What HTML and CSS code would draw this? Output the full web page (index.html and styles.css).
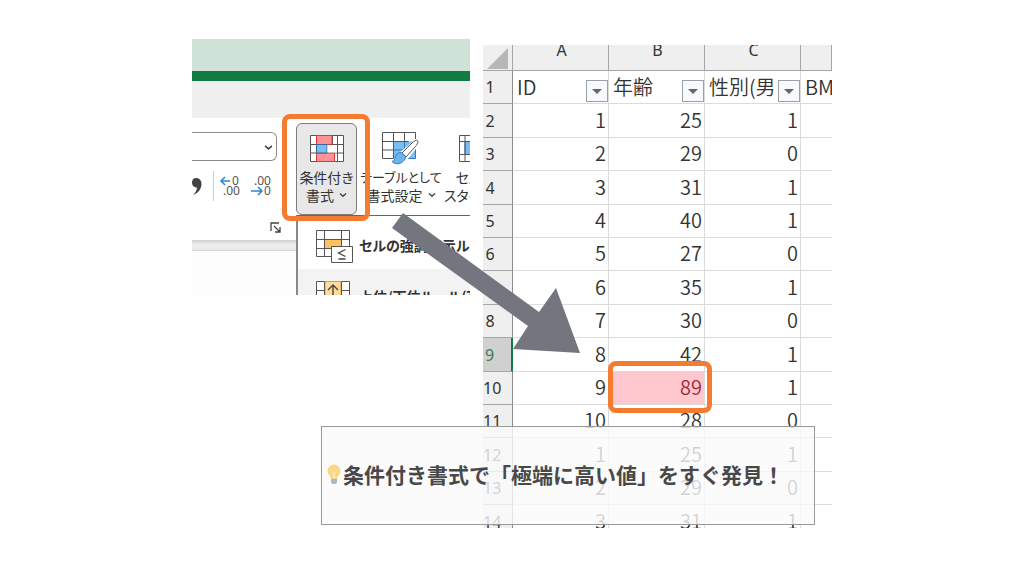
FILE: index.html
```html
<!DOCTYPE html>
<html lang="ja">
<head>
<meta charset="utf-8">
<meta name="viewport" content="width=device-width, initial-scale=1">
<title>条件付き書式</title>
<link rel="stylesheet" href="styles.css">
</head>
<body>
<main class="slide">
  <section class="excel" aria-label="リボン">
    <div class="excel-title"></div>
    <div class="excel-accent"></div>
    <div class="excel-tabs"></div>
    <div class="ribbon">
      <div class="number-group">
        <select class="format-select" aria-label="表示形式"><option></option></select>
        <svg class="select-chevron" viewBox="0 0 8 6"><path d="M1 1.5 4 4.2 7 1.5"/></svg>
        <div class="number-tools">
          <button class="tool comma" aria-label="桁区切り">
            <svg width="10" height="19" viewBox="0 0 10 19"><path d="M4 1c3.500 0 5.500 2.500 5.500 6C9.500 12 6 16.500 1 18c2.500-2.500 4-5 4-7.500C1.500 10.500 0 8 0 5.500 0 3 1.500 1 4 1z"/></svg>
          </button>
          <span class="tool-divider"></span>
          <button class="tool" aria-label="小数点以下の表示桁数を増やす">
            <svg width="22" height="24" viewBox="0 0 22 24"><path class="blue-line" d="M11 7H2M6 3 2 7l4 4"/><text x="13" y="11">0</text><text x="4" y="21">.00</text></svg>
          </button>
          <button class="tool" aria-label="小数点以下の表示桁数を減らす">
            <svg width="22" height="24" viewBox="0 0 22 24"><text x="4" y="11">.00</text><path class="blue-line" d="M1 17h11M8 13l4 4-4 4"/><text x="14" y="21">0</text></svg>
          </button>
        </div>
        <button class="launcher" aria-label="数値の詳細設定">
          <svg width="12" height="12" viewBox="0 0 12 12"><path d="M1 9V1h8M4 4l6 6M10 5v5H5"/></svg>
        </button>
      </div>
      <div class="style-group">
        <button class="big-button active">
          <svg width="34" height="28" viewBox="0 0 34 28">
            <path fill="#fff" d="M.5.5h33v26H.5z"/>
            <path class="grid" d="M.5.5h33v26H.5zM.5 9.500h33M.5 18h33M6.500.5v26M27.500.5v26M22.500.5v26"/>
            <path fill="#ff9297" stroke="#df343c" d="M6.500.5h15.500v9H6.500zM6.500 18h18v8.500h-18z"/>
            <path fill="#7bbcf1" stroke="#34679a" d="M6.500 9.500h10.500V18H6.500z"/>
            <path fill="#fff" d="M17.500 10h9.500v7.500h-9.500z"/>
          </svg>
          <span>条件付き</span>
          <span>書式<svg class="chevron" viewBox="0 0 8 6"><path d="M1 1.500 4 4.200 7 1.500"/></svg></span>
        </button>
        <button class="big-button wide">
          <svg width="38" height="34" viewBox="0 0 38 34">
            <path fill="#fff" d="M.5.5h33v26H.5z"/>
            <path fill="#7bbcf1" d="M11.500 9.500h22v17h-22z"/>
            <path class="grid" d="M33.500 7V.5H.5v26h11M.5 9.500h26M.5 18h11M11.500.5v26M22.500.5v9"/>
            <path stroke="#2d7dc6" fill="none" d="M11.500 18h10M22.500 10v7M33.500 15v11.500H20"/>
            <path fill="#fff" stroke="#fff" stroke-width="4" d="M36 8 20 21l4 5L36 11z"/>
            <path fill="#fff" stroke="#555" d="M35.500 8.500c1.500 1-.5 4-2 6L24 25l-4-4 10-10c2-2 4.500-3.500 5.500-2.500z"/>
            <path fill="#6cb4f0" stroke="#2d7dc6" d="M19 20.500c-5 0-5 3.500-6 6-1 2.500-3 3-3 3 3 3 8 3 11 0 2-2 3-3 2.500-5.500z"/>
          </svg>
          <span class="kana">テーブルとして</span>
          <span>書式設定<svg class="chevron" viewBox="0 0 8 6"><path d="M1 1.500 4 4.200 7 1.500"/></svg></span>
        </button>
        <button class="big-button cell">
          <svg width="34" height="28" viewBox="0 0 34 28">
            <path fill="#fff" d="M.5.5h33v26H.5z"/>
            <path fill="#7bbcf1" stroke="#2d7dc6" d="M6 6.500h22v13H6z"/>
            <path class="grid" d="M.5.5h33v26H.5zM.5 6.500h33M.5 19.500h33M6 .5v26M28 .5v26"/>
          </svg>
          <span>セルの</span>
          <span>スタイル<svg class="chevron" viewBox="0 0 8 6"><path d="M1 1.500 4 4.200 7 1.500"/></svg></span>
        </button>
      </div>
    </div>
    <div class="ribbon-edge"></div>
    <ul class="menu">
      <li><button class="menu-item">
        <svg width="38" height="34" viewBox="0 0 38 34">
          <path fill="#fff" d="M.5.5h33v26H.5z"/>
          <path fill="#ffc15e" d="M9 9.500h16v9H9z"/>
          <path class="grid" d="M.5.5h33v26H.5zM.5 9.500h33M.5 18.500h33M8.500.5v26M25.500.5v26"/>
          <path fill="#fff" stroke="#555" d="M15.500 16.500h21v16h-21z"/>
          <path fill="none" stroke="#444" stroke-width="1.300" d="m29.500 19.500-7 3.500 7 3.500M22.500 29h7"/>
        </svg>
        <span>セルの強調表示ルール</span></button></li>
      <li><button class="menu-item shaded">
        <svg width="38" height="34" viewBox="0 0 38 34">
          <path fill="#fff" d="M.5.5h33v26H.5z"/>
          <path fill="#ffdb9c" stroke="#e59a2a" d="M9 .5h16v26H9z"/>
          <path class="grid" d="M8.500.5h-8v26h33V.5h-8M.5 9.500h8M25.500 9.500h8M8.500.5v26M25.500.5v26"/>
          <path fill="none" stroke="#444" stroke-width="1.400" d="M17 20V4M12 9l5-5 5 5"/>
        </svg>
        <span>上位/下位ルール(T)</span></button></li>
    </ul>
  </section>

  <section class="sheet" aria-label="ワークシート">
    <table>
      <colgroup><col class="col-num"><col><col><col><col class="col-last"></colgroup>
      <thead>
        <tr><th class="corner"><svg width="22" height="22" viewBox="0 0 22 22"><path d="M21 0v21H0z"/></svg></th><th>A</th><th>B</th><th>C</th><th></th></tr>
      </thead>
      <tbody>
        <tr class="fields"><th>1</th>
          <td><div class="field"><span>ID</span><button class="filter" aria-label="IDで絞り込む"></button></div></td>
          <td><div class="field"><span>年齢</span><button class="filter" aria-label="年齢で絞り込む"></button></div></td>
          <td><div class="field"><span>性別(男</span><button class="filter" aria-label="性別で絞り込む"></button></div></td>
          <td><div class="field"><span>BMI</span></div></td></tr>
        <tr><th>2</th><td>1</td><td>25</td><td>1</td><td></td></tr>
        <tr><th>3</th><td>2</td><td>29</td><td>0</td><td></td></tr>
        <tr><th>4</th><td>3</td><td>31</td><td>1</td><td></td></tr>
        <tr><th>5</th><td>4</td><td>40</td><td>1</td><td></td></tr>
        <tr><th>6</th><td>5</td><td>27</td><td>0</td><td></td></tr>
        <tr><th></th><td>6</td><td>35</td><td>1</td><td></td></tr>
        <tr><th>8</th><td>7</td><td>30</td><td>0</td><td></td></tr>
        <tr class="current"><th>9</th><td>8</td><td>42</td><td>1</td><td></td></tr>
        <tr><th>10</th><td>9</td><td class="high">89</td><td>1</td><td></td></tr>
        <tr><th>11</th><td>10</td><td>28</td><td>0</td><td></td></tr>
        <tr><th>12</th><td>1</td><td>25</td><td>1</td><td></td></tr>
        <tr><th>13</th><td>2</td><td>29</td><td>0</td><td></td></tr>
        <tr><th>14</th><td>3</td><td>31</td><td>1</td><td></td></tr>
      </tbody>
    </table>
  </section>

  <div class="ring ring-button"></div>
  <div class="ring ring-cell"></div>
  <svg class="arrow" width="190" height="142" viewBox="0 0 190 142"><path d="M12 1 1 16l136 98-15 23 67 4-24-65-17 24z"/></svg>
  <p class="caption">
    <svg width="14" height="21" viewBox="0 0 14 21"><path fill="#fbd788" d="M7 .5a6.500 6.500 0 0 0-6.500 6.500c0 3.500 3 4.500 3.500 8h6c.5-3.500 3.500-4.500 3.500-8A6.500 6.500 0 0 0 7 .5z"/><path fill="none" stroke="#fff0c4" d="M5 8l1.500 1L7 14l.5-5L9 8"/><path fill="#a9bac6" d="M4 15h6v3.500L8.500 20h-3L4 18.500z"/></svg>
    <span>条件付き書式で「極端に高い値」をすぐ発見！</span>
  </p>
</main>
</body>
</html>
```
FILE: styles.css
```css
* {
  box-sizing: border-box;
}

body {
  margin: 0;
  background: #fff;
  font-family: "Noto Sans CJK JP", "Noto Sans", sans-serif;
  color: #333;
}

button {
  margin: 0;
  padding: 0;
  border: 0;
  background: none;
  font: inherit;
  color: inherit;
}

svg {
  display: block;
  flex: none;
}

.grid {
  fill: none;
  stroke: #555;
}

/* Slide */

.slide {
  position: relative;
  display: grid;
  grid-template-columns: 278fr 349fr;
  gap: 13px;
  align-items: start;
  max-width: 640px;
  margin: 0 auto;
  padding-top: 39px;
}

/* Ribbon excerpt */

.excel {
  position: relative;
  height: 256px;
  overflow: hidden;
  background: #fdfdfd;
}

.excel-title {
  height: 32px;
  background: #cfe2d7;
}

.excel-accent {
  height: 10px;
  background: #107c41;
}

.excel-tabs {
  height: 37px;
  background: #efefef;
}

.ribbon {
  display: flex;
  height: 122px;
  background: #fff;
}

.ribbon-edge {
  height: 11px;
  background: linear-gradient(#cfcfcf, #ececec 40%, #ececec 80%, #d6d6d6);
}

.number-group {
  position: relative;
  display: flex;
  flex: none;
  flex-direction: column;
  width: 95px;
  padding-top: 14px;
}

.format-select {
  width: 85px;
  height: 29px;
  border: 1px solid #8c8c8c;
  border-left: 0;
  border-radius: 0 6px 6px 0;
  background: #fff;
  appearance: none;
}

.select-chevron {
  position: absolute;
  top: 26px;
  left: 72px;
  width: 9px;
  height: 7px;
  fill: none;
  stroke: #444;
  stroke-width: 1.4;
}

.number-tools {
  display: flex;
  align-items: center;
  gap: 9px;
  margin-top: 9px;
  height: 32px;
}

.tool svg {
  overflow: visible;
}

.tool text {
  font: 12px "Noto Sans", sans-serif;
  fill: #555;
}

.comma {
  width: 12px;
}

.comma path {
  fill: #444;
}

.tool-divider {
  width: 1px;
  height: 30px;
  margin-right: -4px;
  background: #ccc;
}

.blue-line {
  fill: none;
  stroke: #2b88d0;
  stroke-width: 1.5;
}

.launcher {
  align-self: flex-end;
  margin: 20px 5px 0 0;
}

.launcher path {
  fill: none;
  stroke: #444;
  stroke-width: 1.3;
}

.style-group {
  display: flex;
  flex: none;
  align-items: flex-start;
  padding: 5px 0 0 9px;
}

.big-button {
  display: flex;
  flex: none;
  flex-direction: column;
  align-items: center;
  width: 61px;
  height: 92px;
  padding-top: 8px;
  border: 1px solid transparent;
  border-radius: 6px;
  font-size: 14px;
  line-height: 18px;
  white-space: nowrap;
}

.big-button > svg {
  height: 36px;
  padding-bottom: 2px;
}

.big-button span {
  display: flex;
  align-items: center;
  gap: 5px;
  font-feature-settings: "palt";
}

.big-button .kana {
  font-size: 13px;
}

.big-button.active {
  border-color: #7c7c7c;
  background: #e8e8e8;
}

.big-button.wide {
  width: 88px;
}

.chevron {
  width: 8px;
  height: 6px;
  fill: none;
  stroke: #444;
  stroke-width: 1.4;
}

.menu {
  position: absolute;
  top: 176px;
  left: 104px;
  right: 0;
  margin: 0;
  padding: 0;
  border-top: 1px solid #666;
  border-left: 2px solid #888;
  list-style: none;
}

.menu-item {
  display: flex;
  gap: 5px;
  width: 100%;
  height: 53px;
  padding: 14px 0 0 18px;
  background: #fff;
  font-size: 14px;
  font-weight: 700;
  line-height: 30px;
  white-space: nowrap;
  font-feature-settings: "palt";
}

.menu-item.shaded {
  padding-top: 12px;
  background: #f3f3f3;
}

/* Worksheet excerpt */

.sheet {
  height: 483px;
  margin-top: 6px;
  overflow: hidden;
}

.sheet table {
  width: 100%;
  table-layout: fixed;
  border-collapse: separate;
  border-spacing: 0;
}

.col-num {
  width: 30px;
}

.col-last {
  width: 31px;
}

.sheet th,
.sheet td {
  height: 33px;
  padding: 0;
  border-right: 1px solid #dcdcdc;
  border-bottom: 1px solid #dcdcdc;
}

.sheet tbody tr:nth-child(5n + 2) td,
.sheet tbody tr:nth-child(5n + 4) td {
  height: 34px;
}

.sheet th {
  border-color: #a6a6a6;
  background: #efefef;
  font: 400 16px/20px "Noto Sans", sans-serif;
}

.sheet thead th {
  height: 26px;
  padding: 0 0 14px 2px;
  line-height: 11px;
}

.sheet thead .corner {
  padding: 2px 0 0 4px;
}

.corner path {
  fill: #b7b7b7;
}

.sheet tbody th {
  padding-right: 15px;
  border-right-color: #8c8c8c;
  text-align: center;
  white-space: nowrap;
}

.sheet td {
  padding: 0 2px 2px 0;
  font-size: 20px;
  font-weight: 350;
  line-height: 28px;
  text-align: right;
}

.sheet td:last-child {
  border-right: 0;
}

.sheet .fields td {
  padding: 0;
}

.field {
  display: flex;
  justify-content: space-between;
  padding-left: 4px;
  overflow: hidden;
  line-height: 30px;
  white-space: nowrap;
}

.filter {
  display: grid;
  flex: none;
  place-items: center;
  align-self: flex-end;
  width: 22px;
  height: 22px;
  border: 1px solid #9a9fac;
  background: #f8f9fc;
}

.filter::after {
  content: "";
  border: 5px solid transparent;
  border-top-color: #666;
  border-bottom: 0;
}

.sheet .current th {
  border-right: 2px solid #107c41;
  background: #d0d0d0;
  color: #3b7a58;
}

.sheet .high {
  background: #ffc7ce;
  color: #a3283a;
}

/* Annotations */

.ring {
  position: absolute;
  border: 5px solid #f47b30;
  border-radius: 8px;
}

.ring-button {
  top: 114px;
  left: 90px;
  width: 88px;
  height: 107px;
}

.ring-cell {
  top: 361px;
  left: 416px;
  width: 104px;
  height: 52px;
}

.arrow {
  position: absolute;
  top: 212px;
  left: 199px;
  width: 190px;
  fill: #73757f;
}

.caption {
  position: absolute;
  top: 426px;
  left: 129px;
  display: flex;
  align-items: center;
  gap: 2px;
  width: 494px;
  height: 99px;
  margin: 0;
  padding: 0 0 3px 5px;
  border: 1px solid #999;
  background: rgba(250, 250, 250, 0.8);
  color: #484848;
  font-size: 21px;
  font-weight: 700;
  white-space: nowrap;
}
```
